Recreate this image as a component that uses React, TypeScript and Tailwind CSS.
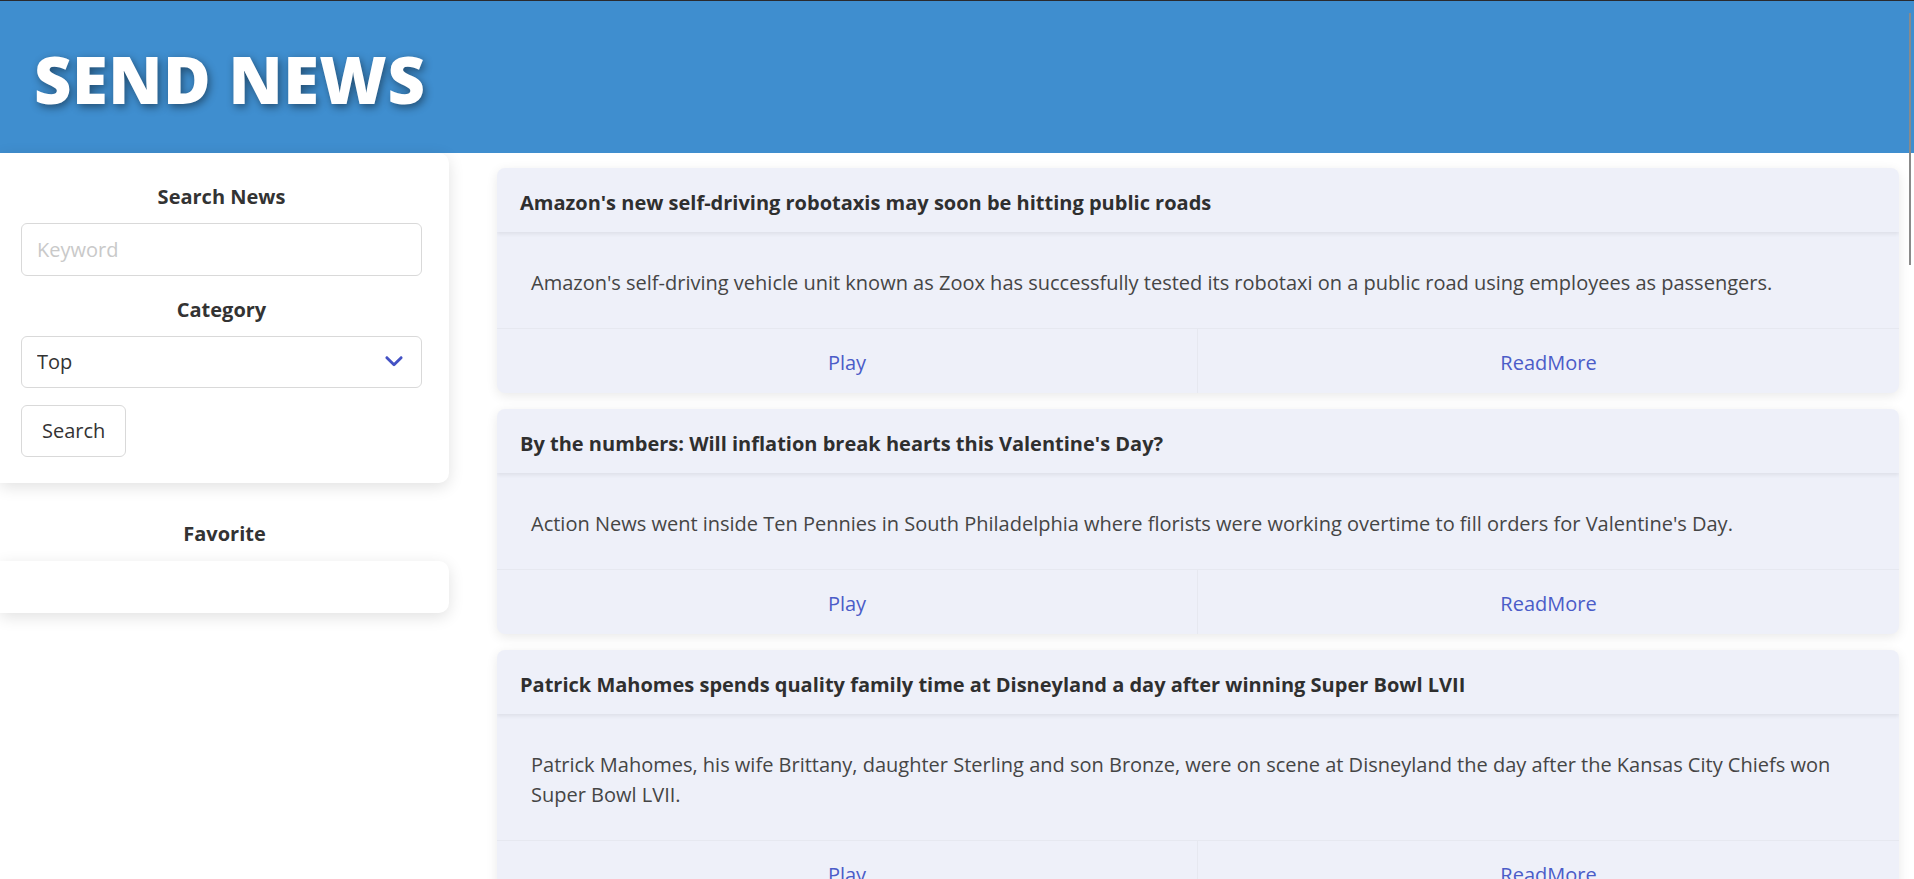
import { useState } from 'react'

const news = [
  {
    title: "Amazon's new self-driving robotaxis may soon be hitting public roads",
    description:
      "Amazon's self-driving vehicle unit known as Zoox has successfully tested its robotaxi on a public road using employees as passengers.",
  },
  {
    title: "By the numbers: Will inflation break hearts this Valentine's Day?",
    description:
      "Action News went inside Ten Pennies in South Philadelphia where florists were working overtime to fill orders for Valentine's Day.",
  },
  {
    title: 'Patrick Mahomes spends quality family time at Disneyland a day after winning Super Bowl LVII',
    description:
      'Patrick Mahomes, his wife Brittany, daughter Sterling and son Bronze, were on scene at Disneyland the day after the Kansas City Chiefs won Super Bowl LVII.',
  },
  {
    title: 'Fed officials signal more rate hikes are coming',
    description: 'Officials said the central bank still has work to do to bring inflation down.',
  },
]

function NewsCard({ title, description }: { title: string; description: string }) {
  return (
    <div className="overflow-hidden rounded-[8px] bg-[#eef0f9] shadow-[0_3px_12px_rgba(0,0,0,0.09)]">
      <div className="relative flex h-[64px] items-center px-[23px] pt-[6px] shadow-[0_2px_4px_rgba(0,0,0,0.07)]">
        <h5 className="text-[20px] font-bold leading-[24px] text-[#2f2f2f]">{title}</h5>
      </div>
      <div className="px-[34px] pb-[30px] pt-[36px]">
        <p className="text-[20px] leading-[30px] text-[#454545]">{description}</p>
      </div>
      <div className="grid h-[65px] grid-cols-2 border-t border-[#e6e8f0]">
        <button className="border-r border-[#e6e8f0] pt-[4px] text-[20px] text-[#4b5cc8]">Play</button>
        <button className="pt-[4px] text-[20px] text-[#4b5cc8]">ReadMore</button>
      </div>
    </div>
  )
}

export default function App() {
  const [keyword, setKeyword] = useState('')
  const [category, setCategory] = useState('Top')

  return (
    <div className="min-h-screen bg-white font-['Segoe_UI','Open_Sans',sans-serif] text-[#333]">
      <div className="h-px bg-[#2a2a2e]" />
      <header className="flex h-[152px] items-center bg-[#3f8ecf] pl-[34px] pt-[4px]">
        <h1 className="text-[65px] font-extrabold leading-none tracking-[0.5px] text-white [text-shadow:2px_3px_8px_rgba(0,0,0,0.45)]">
          SEND NEWS
        </h1>
      </header>

      <div className="flex items-start gap-[48px] pr-[15px]">
        <aside className="w-[449px] shrink-0">
          <form
            onSubmit={(e) => e.preventDefault()}
            className="rounded-r-[10px] bg-white pb-[26px] pl-[21px] pr-[27px] pt-[32px] shadow-[0_4px_16px_rgba(0,0,0,0.12)]"
          >
            <h5 className="text-center text-[20px] font-bold leading-[24px]">Search News</h5>
            <input
              value={keyword}
              onChange={(e) => setKeyword(e.target.value)}
              placeholder="Keyword"
              className="mt-[14px] block h-[53px] w-full rounded-[6px] border border-[#d9d9d9] px-[15px] text-[20px] outline-none placeholder:text-[#c9c9c9]"
            />
            <h5 className="mt-[22px] text-center text-[20px] font-bold leading-[24px]">Category</h5>
            <div className="relative mt-[14px]">
              <select
                value={category}
                onChange={(e) => setCategory(e.target.value)}
                className="block h-[52px] w-full appearance-none rounded-[6px] border border-[#d9d9d9] bg-white px-[15px] text-[20px] text-[#333] outline-none"
              >
                <option>Top</option>
                <option>Business</option>
                <option>Entertainment</option>
                <option>Health</option>
                <option>Science</option>
                <option>Sports</option>
                <option>Technology</option>
              </select>
              <svg
                viewBox="0 0 448 512"
                className="pointer-events-none absolute right-[18px] top-1/2 h-[23px] w-[20px] -translate-y-1/2 fill-[#4452c4]"
              >
                <path d="M201.4 342.6c12.5 12.5 32.8 12.5 45.3 0l160-160c12.5-12.5 12.5-32.8 0-45.3s-32.8-12.5-45.3 0L224 274.7 86.6 137.4c-12.5-12.5-32.8-12.5-45.3 0s-12.5 32.8 0 45.3l160 160z" />
              </svg>
            </div>
            <button
              type="submit"
              className="mt-[17px] h-[52px] rounded-[6px] border border-[#d9d9d9] bg-white px-[20px] text-[20px] text-[#333]"
            >
              Search
            </button>
          </form>

          <h5 className="mt-[39px] text-center text-[20px] font-bold leading-[24px]">Favorite</h5>
          <div className="mt-[15px] h-[52px] rounded-r-[10px] bg-white shadow-[0_4px_16px_rgba(0,0,0,0.12)]" />
        </aside>

        <main className="flex min-w-0 flex-1 flex-col gap-[16px] pb-[16px] pt-[15px]">
          {news.map((n) => (
            <NewsCard key={n.title} title={n.title} description={n.description} />
          ))}
        </main>
      </div>

      <div className="fixed right-[3px] top-[13px] h-[252px] w-[2px] bg-[#8a8a8a]" />
    </div>
  )
}
